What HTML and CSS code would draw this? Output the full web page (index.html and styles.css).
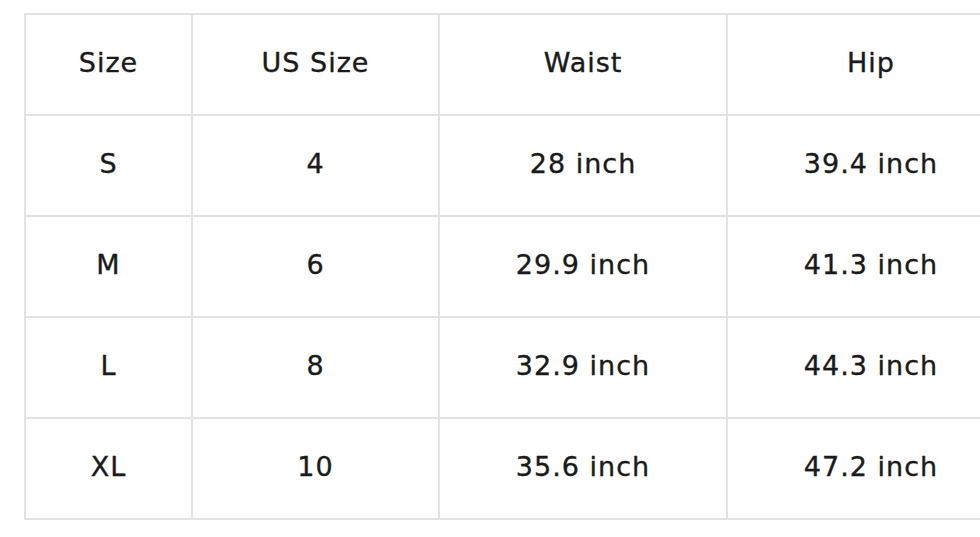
FILE: index.html
```html
<!DOCTYPE html>
<html>
<head>
<meta charset="utf-8">
<link rel="stylesheet" href="styles.css">
</head>
<body>
<table class="size-table">
  <colgroup>
    <col class="c1"><col class="c2"><col class="c3"><col class="c4">
  </colgroup>
  <tr><td>Size</td><td>US Size</td><td>Waist</td><td>Hip</td></tr>
  <tr><td>S</td><td>4</td><td>28 inch</td><td>39.4 inch</td></tr>
  <tr><td>M</td><td>6</td><td>29.9 inch</td><td>41.3 inch</td></tr>
  <tr><td>L</td><td>8</td><td>32.9 inch</td><td>44.3 inch</td></tr>
  <tr><td>XL</td><td>10</td><td>35.6 inch</td><td>47.2 inch</td></tr>
</table>
</body>
</html>
```
FILE: styles.css
```css
html, body {
  margin: 0;
  padding: 0;
  background: #fff;
  overflow: hidden;
  width: 980px;
  height: 537px;
}
.size-table {
  margin: 13px 0 0 24px;
  border-collapse: collapse;
  table-layout: fixed;
  width: 990px;
  font-family: "DejaVu Sans", sans-serif;
  font-size: 27px;
  letter-spacing: 1px;
  color: #1a1a1a;
  -webkit-text-stroke: 0.35px #1a1a1a;
}
.c1 { width: 167px; }
.c2 { width: 247px; }
.c3 { width: 288px; }
.c4 { width: 288px; }
.size-table td {
  border: 2px solid #e3e3e3;
  height: 95px;
  padding: 0 0 4px 0;
  text-align: center;
  vertical-align: middle;
}
```
